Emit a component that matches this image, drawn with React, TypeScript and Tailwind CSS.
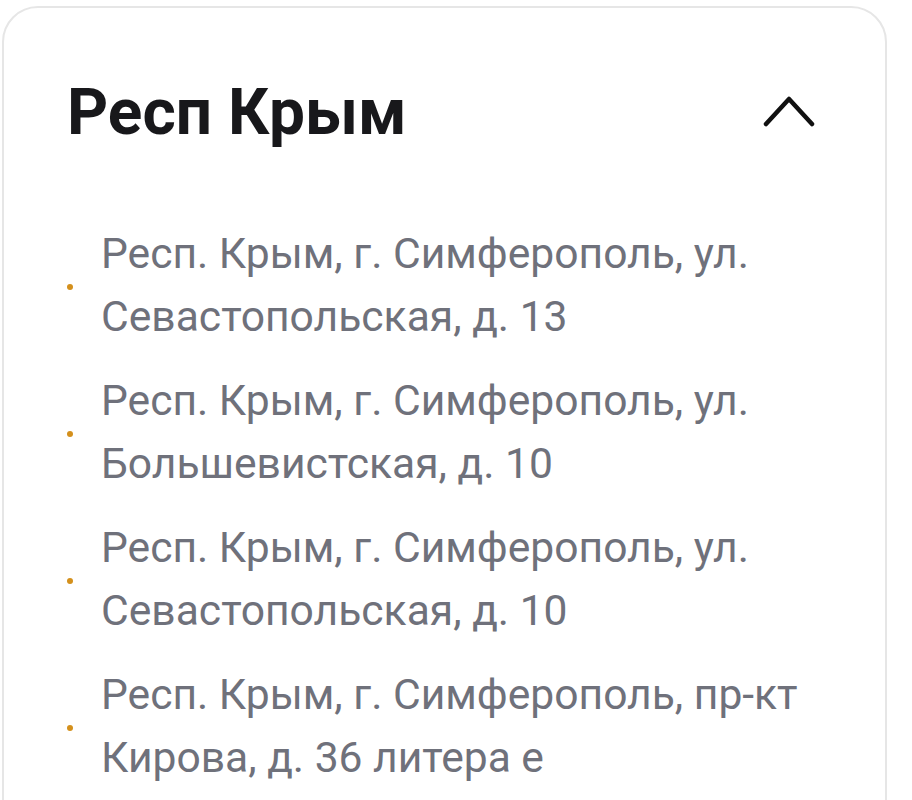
const ADDRESSES: string[] = [
  "Респ. Крым, г. Симферополь, ул. Севастопольская, д. 13",
  "Респ. Крым, г. Симферополь, ул. Большевистская, д. 10",
  "Респ. Крым, г. Симферополь, ул. Севастопольская, д. 10",
  "Респ. Крым, г. Симферополь, пр-кт Кирова, д. 36 литера е",
];

function ChevronUpIcon() {
  return (
    <svg width="52" height="34" viewBox="0 0 52 34" fill="none">
      <polyline
        points="3,30 26,5 49,30"
        stroke="#111111"
        strokeWidth="4.5"
        strokeLinecap="round"
        strokeLinejoin="round"
      />
    </svg>
  );
}

function AddressItem({ text }: { text: string }) {
  return (
    <li className="flex flex-row items-center">
      <span className="w-[6px] h-[6px] rounded-full bg-[#d4901c] shrink-0 mt-[4px]" />
      <span className="ml-[28px] flex-1 text-[42.6px] leading-[63px] text-[#6f717b]">
        {text}
      </span>
    </li>
  );
}

export default function App() {
  return (
    <div
      className="w-[912px] h-[800px] bg-white overflow-hidden pt-[6px] pl-[2px] pr-[25px]"
      style={{ fontFamily: "Roboto, 'Noto Sans', sans-serif" }}
    >
      <div className="h-[900px] rounded-[36px] border-2 border-[#e6e6e6] bg-white pl-[63px] pr-[60px] pt-[70px]">
        {/* Header */}
        <div className="flex flex-row justify-between items-center h-[70px]">
          <h2 className="text-[64px] font-bold leading-[70px] text-[#18181b]">
            Респ Крым
          </h2>
          <div className="mr-[10px] mt-[-4px]">
            <ChevronUpIcon />
          </div>
        </div>

        {/* Addresses */}
        <ul className="mt-[74px] flex flex-col gap-[21px]">
          {ADDRESSES.map((address) => (
            <AddressItem key={address} text={address} />
          ))}
        </ul>
      </div>
    </div>
  );
}
